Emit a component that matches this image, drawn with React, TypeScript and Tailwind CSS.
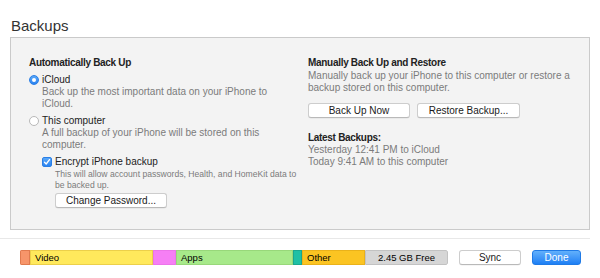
import React from 'react';

function Radio({ checked }: { checked?: boolean }) {
  if (checked) {
    return (
      <span className="flex h-[10px] w-[10px] items-center justify-center rounded-full border border-[#2a7fe6] bg-gradient-to-b from-[#5aa8f8] to-[#2a83f0]">
        <span className="h-[4px] w-[4px] rounded-full bg-white" />
      </span>
    );
  }
  return <span className="h-[10px] w-[10px] rounded-full border border-[#b8b8b8] bg-white" />;
}

function Checkbox() {
  return (
    <span className="flex h-[10px] w-[10px] items-center justify-center rounded-[2px] border border-[#2a7fe6] bg-gradient-to-b from-[#5aa8f8] to-[#2a83f0]">
      <svg width="8" height="8" viewBox="0 0 8 8" fill="none">
        <path d="M1.5 4.2 L3.2 6 L6.5 1.6" stroke="white" strokeWidth="1.3" strokeLinecap="round" strokeLinejoin="round" />
      </svg>
    </span>
  );
}

function Btn({ children, className = '' }: { children: React.ReactNode; className?: string }) {
  return (
    <div
      className={`flex h-[15px] items-center justify-center rounded-[3px] border border-[#cdcdcd] border-b-[#b9b9b9] bg-white text-[10px] leading-none text-[#1a1a1a] shadow-[0_0.5px_0.5px_rgba(0,0,0,0.08)] ${className}`}
    >
      {children}
    </div>
  );
}

export default function App() {
  return (
    <div className="h-[278px] w-[600px] overflow-hidden bg-white font-['Liberation_Sans',Arial,sans-serif] text-[#222]">
      <h1 className="pl-[11px] pt-[17px] text-[15px] leading-[18px] text-[#333]">Backups</h1>

      {/* Backups panel */}
      <div className="ml-[10px] mt-[2px] grid h-[193px] w-[580px] grid-cols-[279px_1fr] border border-[#cacaca] bg-[#f3f3f3] pl-[18px] pt-[18px]">
        <div>
          <p className="text-[10px] font-bold leading-[13px] tracking-[-0.3px]">Automatically Back Up</p>

          <div className="mt-[4px] flex h-[13px] items-center gap-[3px]">
            <Radio checked />
            <span className="text-[10px] leading-[13px]">iCloud</span>
          </div>
          <p className="pl-[13px] text-[10px] leading-[12px] text-[#7b7b7b]">
            Back up the most important data on your iPhone to
            <br />
            iCloud.
          </p>

          <div className="mt-[4px] flex h-[13px] items-center gap-[3px]">
            <Radio />
            <span className="text-[10px] leading-[13px]">This computer</span>
          </div>
          <p className="pl-[13px] text-[10px] leading-[12px] text-[#7b7b7b]">
            A full backup of your iPhone will be stored on this
            <br />
            computer.
          </p>

          <div className="mt-[4px] pl-[13px]">
            <div className="flex h-[13px] items-center gap-[3px]">
              <Checkbox />
              <span className="text-[10px] leading-[13px]">Encrypt iPhone backup</span>
            </div>
            <p className="mt-[1px] pl-[13px] text-[8.6px] leading-[11px] text-[#7b7b7b]">
              This will allow account passwords, Health, and HomeKit data to
              <br />
              be backed up.
            </p>
            <Btn className="ml-[13px] mt-[2px] w-[112px]">Change Password...</Btn>
          </div>
        </div>

        <div>
          <p className="text-[10px] font-bold leading-[13px] tracking-[-0.3px]">Manually Back Up and Restore</p>
          <p className="mt-[1px] text-[10px] leading-[12px] text-[#7b7b7b]">
            Manually back up your iPhone to this computer or restore a
            <br />
            backup stored on this computer.
          </p>
          <div className="mt-[9px] flex gap-[7px]">
            <Btn className="w-[102px]">Back Up Now</Btn>
            <Btn className="w-[103px]">Restore Backup...</Btn>
          </div>
          <p className="mt-[13px] text-[10px] font-bold leading-[13px] tracking-[-0.3px]">Latest Backups:</p>
          <p className="text-[10px] leading-[11.5px] text-[#7b7b7b]">
            Yesterday 12:41 PM to iCloud
            <br />
            Today 9:41 AM to this computer
          </p>
        </div>
      </div>

      <div className="mt-[8px] h-px w-[590px] bg-[#e8e8e8]" />

      {/* Storage bar + actions */}
      <div className="mt-[11px] flex items-center pl-[20px]">
        <div className="flex h-[15px] w-[428px] overflow-hidden rounded-[2px] text-[9.5px] leading-none text-black">
          <div className="w-[10px] border border-[#e07a4e] bg-[#f7956a]" />
          <div className="flex w-[123px] items-center border border-[#ecd04a] bg-[#ffe95c] pl-[4px]">Video</div>
          <div className="w-[23px] border border-[#ec74ea] bg-[#f67ff5]" />
          <div className="flex w-[117px] items-center border border-[#98d87a] bg-[#a7e98a] pl-[4px]">Apps</div>
          <div className="w-[9px] border border-[#1aa88f] bg-[#1fc0a5]" />
          <div className="flex w-[63px] items-center border border-[#eab21a] bg-[#fbc422] pl-[4px]">Other</div>
          <div className="flex w-[83px] items-center justify-center rounded-r-[2px] border border-[#c2c2c2] bg-[#d6d6d6]">
            2.45 GB Free
          </div>
        </div>
        <Btn className="ml-[11px] w-[62px]">Sync</Btn>
        <div className="ml-[11px] flex h-[15px] w-[49px] items-center justify-center rounded-[3px] border border-[#1f7ae6] bg-gradient-to-b from-[#62b0fb] to-[#1c7ff4] text-[10px] leading-none text-white">
          Done
        </div>
      </div>
    </div>
  );
}
